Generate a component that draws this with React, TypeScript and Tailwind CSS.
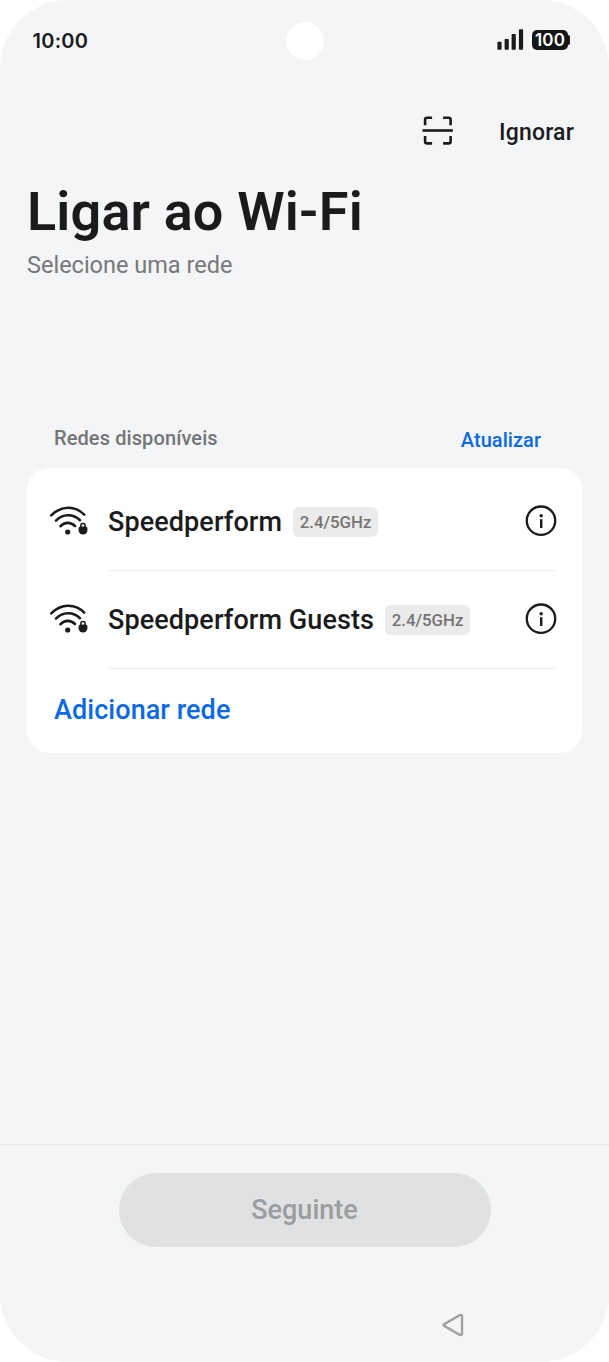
interface Network {
  name: string;
  band: string;
}

const NETWORKS: Network[] = [
  { name: 'Speedperform', band: '2.4/5GHz' },
  { name: 'Speedperform Guests', band: '2.4/5GHz' },
];

function SignalIcon() {
  return (
    <svg width="27" height="22" viewBox="0 0 27 22" fill="currentColor" aria-hidden="true">
      <rect x="0.4" y="12.8" width="4.2" height="8" rx="0.8" />
      <rect x="7.6" y="10" width="4.2" height="10.8" rx="0.8" />
      <rect x="14.6" y="5.1" width="4.2" height="15.7" rx="0.8" />
      <rect x="21.9" y="0.2" width="4.2" height="20.6" rx="0.8" />
    </svg>
  );
}

function BatteryBadge() {
  return (
    <div className="flex items-center">
      <div className="flex h-[20px] w-[36px] items-center justify-center rounded-[5px] bg-[#151617] pt-px font-['Inter',sans-serif] text-[17px] font-semibold leading-none tracking-[0.1px] text-white">
        100
      </div>
      <div className="h-[10px] w-[2px] rounded-r-full bg-[#151617]" />
    </div>
  );
}

function ScanIcon() {
  return (
    <svg width="32" height="30" viewBox="0 0 32 30" fill="none" stroke="currentColor" strokeWidth="2.6" aria-hidden="true">
      <path d="M3.1 9.3V3.8Q3.1 1.8 5.1 1.8H10.1M21.1 1.8H26.6Q28.6 1.8 28.6 3.8V9.3M3.1 19.9V25.4Q3.1 27.4 5.1 27.4H10.1M21.1 27.4H26.6Q28.6 27.4 28.6 25.4V19.9" />
      <path d="M0.5 14.5H30.9" />
    </svg>
  );
}

function WifiLockIcon() {
  return (
    <svg width="40" height="30" viewBox="0 0 40 30" fill="none" stroke="currentColor" strokeWidth="2.6" strokeLinecap="round" aria-hidden="true">
      <path d="M2.2 9.4C12.3 -0.6 25.9 -0.6 35.2 8.6" />
      <path d="M7 14.6C13.8 7.6 24 7.4 31 14.2" />
      <path d="M11.5 20.2C15.5 15.8 21.9 15.8 26 20" />
      <circle cx="18.7" cy="26" r="2.6" fill="currentColor" stroke="none" />
      <path d="M29.6 22.4Q29.6 20.6 31.4 20.6H36.6Q38.4 20.6 38.4 22.4V24.2A4.4 4.4 0 0 1 29.6 24.2Z" fill="currentColor" stroke="none" />
      <path d="M31.9 21V19.3C31.9 17 36.1 17 36.1 19.3V21" strokeWidth="1.5" />
    </svg>
  );
}

function InfoIcon() {
  return (
    <svg width="32" height="32" viewBox="0 0 32 32" fill="none" stroke="currentColor" aria-hidden="true">
      <circle cx="16" cy="15.7" r="14.2" strokeWidth="2.3" />
      <circle cx="16.2" cy="10.8" r="1.7" fill="currentColor" stroke="none" />
      <path d="M16.2 14.2V23" strokeWidth="2.4" />
    </svg>
  );
}

function BackIcon() {
  return (
    <svg width="22" height="24" viewBox="0 0 22 24" fill="none" stroke="currentColor" strokeWidth="2.4" strokeLinejoin="round" aria-hidden="true">
      <path d="M2.2 11.1L17.6 2.3Q20 1.2 20 3.5V20.5Q20 22.8 17.6 21.7L2.2 12.9Q0.6 12 2.2 11.1Z" />
    </svg>
  );
}

function NetworkRow({ network }: { network: Network }) {
  return (
    <li className="flex h-[98px] items-stretch pl-[22px] pr-[27px]">
      <div className="flex w-[60px] items-center pb-[3px]">
        <WifiLockIcon />
      </div>
      <div className="flex flex-1 items-center border-b border-[#ededee]">
        <span className="-ml-px pt-px text-[27px] font-medium leading-8 tracking-[0.09px]">{network.name}</span>
        <span className="ml-[11px] mt-px flex h-[30px] w-[85px] items-center justify-center rounded-[6px] bg-[#ebebeb] pt-[2px] text-[16.8px] font-medium text-[#747474]">
          {network.band}
        </span>
        <button className="-mr-[2px] mb-px ml-auto" aria-label="Detalhes">
          <InfoIcon />
        </button>
      </div>
    </li>
  );
}

export default function App() {
  return (
    <div className="bg-white">
      <main className="flex h-[1362px] w-[609px] flex-col overflow-hidden rounded-[68px] bg-[#f3f5f7] font-['Roboto',sans-serif] text-[#1a1b1c]">
        <header className="grid h-[81px] grid-cols-3 items-center">
          <span className="pl-[32.5px] font-['Inter',sans-serif] text-[20px] font-semibold tracking-[0.25px]">10:00</span>
          <div className="size-[38px] justify-self-center rounded-full bg-white" />
          <div className="flex items-center justify-end gap-[8px] pb-px pr-[39px]">
            <SignalIcon />
            <BatteryBadge />
          </div>
        </header>

        <div className="flex h-[101px] items-center justify-end gap-[45px] pb-[2px] pr-[35px]">
          <button aria-label="Ler código">
            <ScanIcon />
          </button>
          <button className="pt-[5px] text-[23px] font-medium tracking-[0.2px]">Ignorar</button>
        </div>

        <div className="h-[236px] px-[27px]">
          <h1 className="text-[54px] font-semibold leading-[60px] tracking-[0.15px]">Ligar ao Wi-Fi</h1>
          <p className="mt-[8px] text-[23.5px] leading-[30px] text-[#77787a]">Selecione uma rede</p>
        </div>

        <div className="flex h-[50px] justify-between pl-[54px] pr-[68px]">
          <h2 className="pt-[6px] text-[20px] font-medium leading-[28px] tracking-[0.1px] text-[#747576]">Redes disponíveis</h2>
          <button className="self-start pt-[8px] text-[20px] font-medium leading-[28px] tracking-[0.05px] text-[#0b69e8]">Atualizar</button>
        </div>

        <section className="mx-[27px] h-[285px] rounded-[22px] bg-white pt-[5px]">
          <ul>
            {NETWORKS.map((network) => (
              <NetworkRow key={network.name} network={network} />
            ))}
          </ul>
          <button className="flex h-[82px] items-center pl-[27px] text-[27px] font-medium tracking-[0.06px] text-[#0b69e8]">
            Adicionar rede
          </button>
        </section>

        <footer className="mt-auto h-[218px] border-t border-[#e5e7e8] pt-[27.5px]">
          <button className="mx-auto flex h-[74px] w-[372px] items-center justify-center rounded-full bg-[#dfe1e2] pt-[2px] text-[27px] font-medium text-[#9b9d9f]">
            Seguinte
          </button>
          <div className="flex justify-end pr-[145px] pt-[66.5px] text-[#a0a1a3]">
            <BackIcon />
          </div>
        </footer>
      </main>
    </div>
  );
}
